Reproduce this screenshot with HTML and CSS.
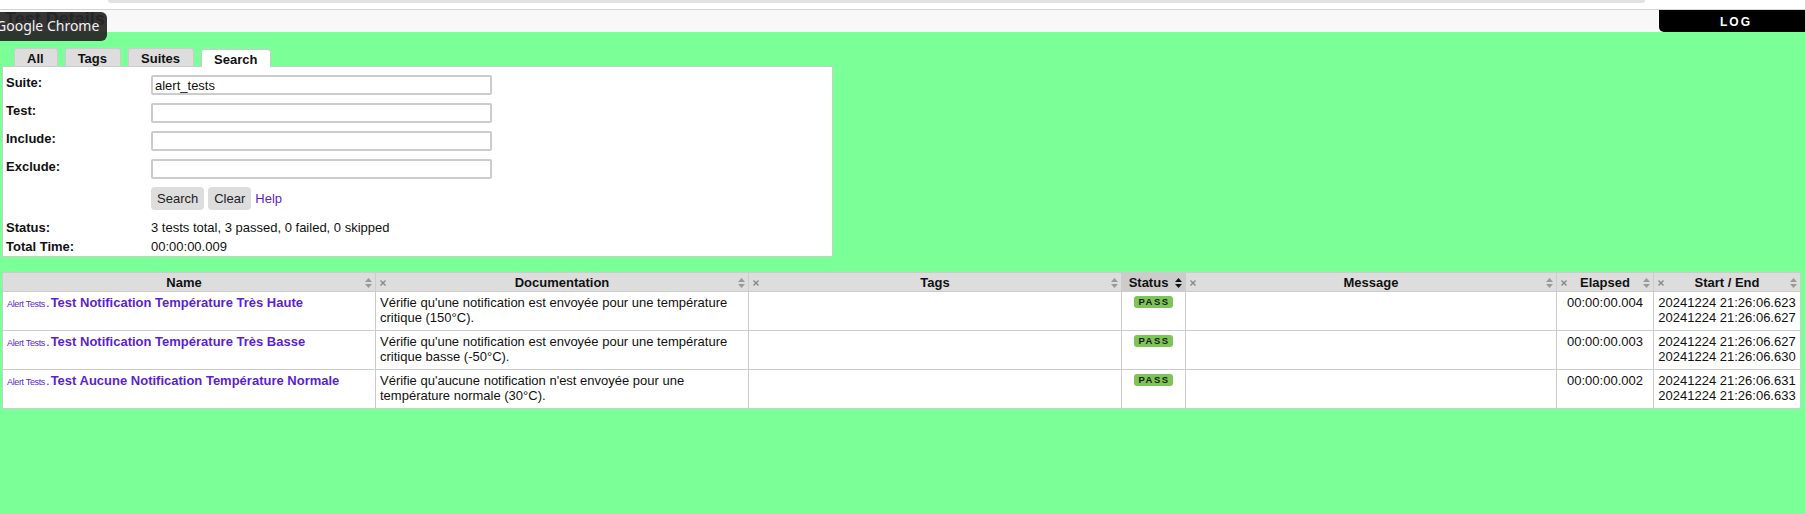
FILE: index.html
```html
<!DOCTYPE html>
<html lang="fr">
<head>
<meta charset="utf-8">
<title>Alert Tests Report</title>
<link rel="stylesheet" href="styles.css">
</head>
<body>
<div class="chrome-top"><div class="addr-edge"></div></div>
<div class="header-bar">
  <h2 class="page-title">Test Details</h2>
  <a class="log-link" href="#">LOG</a>
</div>
<div class="tooltip">Google Chrome</div>

<main class="content">
  <nav class="tabs">
    <span class="tab">All</span>
    <span class="tab">Tags</span>
    <span class="tab">Suites</span>
    <span class="tab active">Search</span>
  </nav>
  <section class="panel">
    <div class="form-grid">
      <label class="lbl">Suite:</label><input class="field" type="text" value="alert_tests">
      <label class="lbl">Test:</label><input class="field" type="text" value="">
      <label class="lbl">Include:</label><input class="field" type="text" value="">
      <label class="lbl">Exclude:</label><input class="field" type="text" value="">
      <span></span>
      <div class="actions">
        <button class="btn">Search</button>
        <button class="btn">Clear</button>
        <a class="help" href="#">Help</a>
      </div>
    </div>
    <div class="stats-grid">
      <span class="lbl">Status:</span><span>3 tests total, 3 passed, 0 failed, 0 skipped</span>
      <span class="lbl">Total Time:</span><span>00:00:00.009</span>
    </div>
  </section>

  <table class="details">
    <colgroup>
      <col class="c-name"><col class="c-doc"><col class="c-tags"><col class="c-status"><col class="c-msg"><col class="c-elapsed"><col class="c-times">
    </colgroup>
    <thead>
      <tr>
        <th><div class="th-in"><span class="th-title">Name</span><svg class="sort" width="7" height="10" viewBox="0 0 7 10"><polygon points="0,4 3.5,0 7,4"/><polygon points="0,6 3.5,10 7,6"/></svg></div></th>
        <th><div class="th-in"><svg class="close" width="6" height="6" viewBox="0 0 6 6"><path d="M0.5 0.5L5.5 5.5M5.5 0.5L0.5 5.5"/></svg><span class="th-title">Documentation</span><svg class="sort" width="7" height="10" viewBox="0 0 7 10"><polygon points="0,4 3.5,0 7,4"/><polygon points="0,6 3.5,10 7,6"/></svg></div></th>
        <th><div class="th-in"><svg class="close" width="6" height="6" viewBox="0 0 6 6"><path d="M0.5 0.5L5.5 5.5M5.5 0.5L0.5 5.5"/></svg><span class="th-title">Tags</span><svg class="sort" width="7" height="10" viewBox="0 0 7 10"><polygon points="0,4 3.5,0 7,4"/><polygon points="0,6 3.5,10 7,6"/></svg></div></th>
        <th class="sorted"><div class="th-in"><span class="th-title">Status</span><svg class="sort dark" width="7" height="10" viewBox="0 0 7 10"><polygon points="0,4 3.5,0 7,4"/><polygon points="0,6 3.5,10 7,6"/></svg></div></th>
        <th><div class="th-in"><svg class="close" width="6" height="6" viewBox="0 0 6 6"><path d="M0.5 0.5L5.5 5.5M5.5 0.5L0.5 5.5"/></svg><span class="th-title">Message</span><svg class="sort" width="7" height="10" viewBox="0 0 7 10"><polygon points="0,4 3.5,0 7,4"/><polygon points="0,6 3.5,10 7,6"/></svg></div></th>
        <th><div class="th-in"><svg class="close" width="6" height="6" viewBox="0 0 6 6"><path d="M0.5 0.5L5.5 5.5M5.5 0.5L0.5 5.5"/></svg><span class="th-title">Elapsed</span><svg class="sort" width="7" height="10" viewBox="0 0 7 10"><polygon points="0,4 3.5,0 7,4"/><polygon points="0,6 3.5,10 7,6"/></svg></div></th>
        <th><div class="th-in"><svg class="close" width="6" height="6" viewBox="0 0 6 6"><path d="M0.5 0.5L5.5 5.5M5.5 0.5L0.5 5.5"/></svg><span class="th-title">Start / End</span><svg class="sort" width="7" height="10" viewBox="0 0 7 10"><polygon points="0,4 3.5,0 7,4"/><polygon points="0,6 3.5,10 7,6"/></svg></div></th>
      </tr>
    </thead>
    <tbody>
      <tr>
        <td><a class="parent" href="#">Alert Tests</a><span class="dot">.</span><a class="test-name" href="#">Test Notification Température Très Haute</a></td>
        <td>Vérifie qu'une notification est envoyée pour une température critique (150°C).</td>
        <td></td>
        <td class="center"><span class="badge">PASS</span></td>
        <td></td>
        <td class="center">00:00:00.004</td>
        <td class="center">20241224 21:26:06.623<br>20241224 21:26:06.627</td>
      </tr>
      <tr>
        <td><a class="parent" href="#">Alert Tests</a><span class="dot">.</span><a class="test-name" href="#">Test Notification Température Très Basse</a></td>
        <td>Vérifie qu'une notification est envoyée pour une température critique basse (-50°C).</td>
        <td></td>
        <td class="center"><span class="badge">PASS</span></td>
        <td></td>
        <td class="center">00:00:00.003</td>
        <td class="center">20241224 21:26:06.627<br>20241224 21:26:06.630</td>
      </tr>
      <tr>
        <td><a class="parent" href="#">Alert Tests</a><span class="dot">.</span><a class="test-name" href="#">Test Aucune Notification Température Normale</a></td>
        <td>Vérifie qu'aucune notification n'est envoyée pour une température normale (30°C).</td>
        <td></td>
        <td class="center"><span class="badge">PASS</span></td>
        <td></td>
        <td class="center">00:00:00.002</td>
        <td class="center">20241224 21:26:06.631<br>20241224 21:26:06.633</td>
      </tr>
    </tbody>
  </table>
</main>
</body>
</html>
```

FILE: styles.css
```css
html, body {
  margin: 0;
  padding: 0;
}
body {
  position: relative;
  height: 514px;
  overflow: hidden;
  background: #7bff97;
  font-family: "Liberation Sans", Arial, sans-serif;
  font-size: 13px;
  line-height: 15px;
  color: #111;
}

/* top browser remnant */
.chrome-top {
  height: 9px;
  background: #fff;
  border-bottom: 1px solid #d4d4d4;
}
.addr-edge {
  margin: 0 160px 0 108px;
  height: 3px;
  background: #e2e2e2;
  border-radius: 0 0 9px 9px;
}

.header-bar {
  display: flex;
  height: 22px;
  background: #f8f8f8;
}
.page-title {
  flex: 1;
  margin: 0;
  padding-left: 5px;
  font-size: 18px;
  line-height: 18px;
  font-weight: bold;
  color: #222;
  overflow: hidden;
}
.log-link {
  width: 146px;
  height: 22px;
  box-sizing: border-box;
  padding-left: 8px;
  padding-top: 1px;
  background: #000;
  color: #fff;
  font-size: 12px;
  line-height: 22px;
  font-weight: bold;
  letter-spacing: 2px;
  text-align: center;
  text-decoration: none;
  border-bottom-left-radius: 5px;
}

.tooltip {
  position: absolute;
  left: -8px;
  top: 12px;
  width: 115px;
  height: 29px;
  box-sizing: border-box;
  padding-left: 4px;
  background: rgba(38, 38, 38, 0.93);
  border-radius: 6px;
  color: #f2f2f2;
  font-family: "Noto Sans", "Open Sans", sans-serif;
  font-size: 14px;
  line-height: 27px;
  white-space: nowrap;
  overflow: hidden;
}

.content {
  padding: 16px 5px 0 2px;
}

/* tabs */
.tabs {
  position: relative;
  z-index: 1;
  display: flex;
  align-items: flex-end;
  gap: 7px;
  height: 18px;
  padding-left: 12px;
}
.tab {
  box-sizing: border-box;
  height: 18px;
  padding: 2px 13px 0 12px;
  line-height: 15px;
  background: #ddd;
  border: 1px solid #ccc;
  border-bottom: none;
  border-radius: 3px 3px 0 0;
  font-weight: bold;
  color: #111;
}
.tab.active {
  background: #fff;
  padding-top: 3px;
  line-height: 14px;
  margin-bottom: -1px;
}

/* search panel */
.panel {
  width: 831px;
  box-sizing: border-box;
  padding: 8px 3px 2px;
  background: #fff;
  border: 1px solid #ccc;
}
.form-grid {
  display: grid;
  grid-template-columns: 145px 341px;
  row-gap: 8px;
}
.lbl {
  font-weight: bold;
}
.field {
  box-sizing: border-box;
  width: 341px;
  height: 20px;
  margin: 0;
  padding: 0 2px;
  border: 2px solid #ccc;
  border-radius: 2px;
  font-family: "Liberation Sans", Arial, sans-serif;
  font-size: 13px;
  color: #111;
  background: #fff;
}
.actions {
  display: flex;
  align-items: center;
  gap: 4px;
}
.btn {
  height: 23px;
  padding: 0 6px;
  border: none;
  border-radius: 4px;
  background: #ddd;
  font-family: "Liberation Sans", Arial, sans-serif;
  font-size: 13px;
  color: #222;
}
.help {
  color: #5b1fd6;
  text-decoration: none;
}
.stats-grid {
  display: grid;
  grid-template-columns: 145px auto;
  row-gap: 4px;
  margin-top: 10px;
}

/* details table */
.details {
  margin-top: 15px;
  width: 1798px;
  table-layout: fixed;
  border-collapse: collapse;
  background: #fff;
  border: 1px solid #ccc;
}
.c-name, .c-doc, .c-tags { width: 373px; }
.c-status { width: 64px; }
.c-msg { width: 371px; }
.c-elapsed { width: 97px; }
.c-times { width: 147px; }

.details th {
  padding: 2px 3px 1px 4px;
  background: #ddd;
  border: 1px solid #ccc;
  font-weight: bold;
  line-height: 15px;
  color: #111;
}
.details th.sorted {
  background: #ccc;
}
.th-in {
  display: flex;
  align-items: center;
}
.th-title {
  flex: 1;
  text-align: center;
  white-space: nowrap;
}
.close {
  flex: none;
  margin-right: 4px;
  stroke: #888;
  stroke-width: 1.4;
}
.sort {
  flex: none;
  margin-left: 4px;
  fill: #999;
}
.sort.dark {
  fill: #111;
}

.details td {
  padding: 3px 4px 5px;
  border: 1px solid #ccc;
  vertical-align: top;
  line-height: 15px;
  height: 30px;
  color: #111;
}
.details td.center {
  text-align: center;
}
.parent {
  font-size: 9px;
  letter-spacing: -0.35px;
  color: #5b1fd6;
  text-decoration: none;
}
.dot {
  font-size: 13px;
  color: #5b1fd6;
  margin: 0 1px 0 1px;
}
.test-name {
  font-weight: bold;
  color: #5b1fd6;
  text-decoration: none;
}
.badge {
  display: inline-block;
  vertical-align: top;
  margin-top: 1px;
  height: 12px;
  padding: 0 3px 0 4px;
  border-radius: 3px;
  background: #7fc458;
  color: #1a1a1a;
  font-size: 9.5px;
  line-height: 12px;
  font-weight: bold;
  letter-spacing: 1.5px;
}
```
